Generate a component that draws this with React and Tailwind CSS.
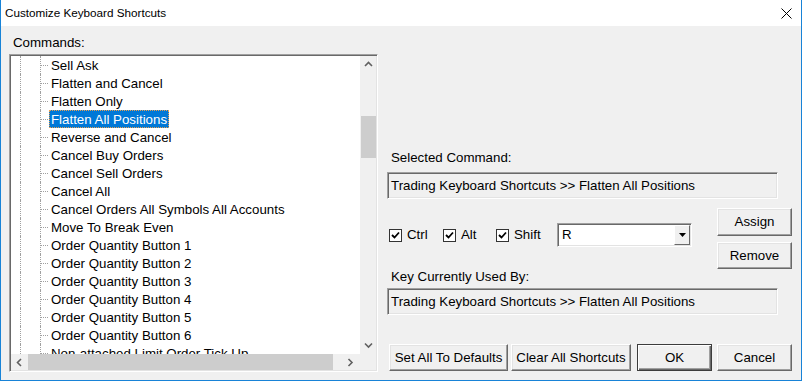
import React from 'react';

const commands = [
  'Sell Ask',
  'Flatten and Cancel',
  'Flatten Only',
  'Flatten All Positions',
  'Reverse and Cancel',
  'Cancel Buy Orders',
  'Cancel Sell Orders',
  'Cancel All',
  'Cancel Orders All Symbols All Accounts',
  'Move To Break Even',
  'Order Quantity Button 1',
  'Order Quantity Button 2',
  'Order Quantity Button 3',
  'Order Quantity Button 4',
  'Order Quantity Button 5',
  'Order Quantity Button 6',
  'Non-attached Limit Order Tick Up',
];

const Chevron = ({ dir }) => {
  const pts = {
    up: '1,5 4.5,1.5 8,5',
    down: '1,1.5 4.5,5 8,1.5',
    left: '5,1 1.5,4.5 5,8',
    right: '1.5,1 5,4.5 1.5,8',
  }[dir];
  const vertical = dir === 'up' || dir === 'down';
  return (
    <svg width={vertical ? 9 : 7} height={vertical ? 7 : 9} viewBox={vertical ? '0 0 9 7' : '0 0 7 9'}>
      <polyline points={pts} fill="none" stroke="#606060" strokeWidth="1.6" />
    </svg>
  );
};

const Btn = ({ children, className = '', isDefault = false }) => (
  <button
    className={`h-[27px] shrink-0 bg-[#f0f0f0] text-[13.3px] text-black whitespace-nowrap ${
      isDefault
        ? 'border border-[#3c3c3c] shadow-[inset_1px_1px_0_#ffffff,inset_-1px_-1px_0_#696969,inset_-2px_-2px_0_#a0a0a0]'
        : 'border border-t-white border-l-white border-r-[#696969] border-b-[#696969] shadow-[inset_-1px_-1px_0_#a0a0a0,inset_1px_1px_0_#e3e3e3]'
    } ${className}`}
  >
    {children}
  </button>
);

const Check = ({ label, width }) => (
  <label className="flex items-center shrink-0" style={{ width }}>
    <span className="w-[13px] h-[13px] bg-white border border-[#333] flex items-center justify-center">
      <svg width="9" height="9" viewBox="0 0 9 9">
        <polyline points="1,4 3.5,6.5 8,1.5" fill="none" stroke="#000" strokeWidth="1.8" />
      </svg>
    </span>
    <span className="ml-[5px] leading-[16px]">{label}</span>
  </label>
);

const ReadBox = ({ children }) => (
  <div className="w-[391px] h-[27px] bg-[#f0f0f0] border border-t-[#a0a0a0] border-l-[#a0a0a0] border-r-white border-b-white shadow-[inset_1px_1px_0_#696969,inset_-1px_-1px_0_#e3e3e3] flex items-center pl-[3px] leading-[16px] whitespace-nowrap">
    {children}
  </div>
);

export default function App() {
  return (
    <div className="w-[802px] h-[381px] flex flex-col bg-[#f0f0f0] border-x border-b border-[#1883d7] font-['Liberation_Sans',Arial,sans-serif] text-[13.3px] text-black overflow-hidden">
      {/* title bar */}
      <div className="h-[26px] shrink-0 bg-white flex items-center justify-between pl-[4px] pr-[9px]">
        <span className="text-[11.7px] leading-[16px]">Customize Keyboard Shortcuts</span>
        <svg width="11" height="11" viewBox="0 0 11 11">
          <path d="M0.5 0.5 L10.5 10.5 M10.5 0.5 L0.5 10.5" stroke="#000" strokeWidth="1" />
        </svg>
      </div>

      <div className="flex flex-1 pl-[8px] pt-[9px]">
        {/* left column */}
        <div className="w-[369px] shrink-0 flex flex-col">
          <div className="pl-[4px] leading-[16px]">Commands:</div>
          <div className="mt-[3px] w-[369px] h-[318px] border border-t-[#a0a0a0] border-l-[#a0a0a0] border-r-white border-b-white shadow-[inset_1px_1px_0_#696969,inset_-1px_-1px_0_#e3e3e3] p-[1px] flex flex-col">
            <div className="flex flex-1 min-h-0">
              <div className="flex-1 bg-white overflow-hidden">
                {commands.map((c, i) => (
                  <div key={c} className="flex h-[18px]">
                    <div className="w-[9px] shrink-0" />
                    <div className="w-[20px] shrink-0 border-l border-dotted border-[#a0a0a0]" />
                    <div className="w-[9px] shrink-0 border-l border-dotted border-[#a0a0a0] pt-[9px]">
                      <div className="w-[7px] border-t border-dotted border-[#a0a0a0]" />
                    </div>
                    <span
                      className={`px-[2px] pt-[1px] leading-[17px] whitespace-nowrap ${
                        i === 3
                          ? 'bg-[#0078d7] text-white outline outline-1 outline-dotted outline-[#e8a050] -outline-offset-1'
                          : ''
                      }`}
                    >
                      {c}
                    </span>
                  </div>
                ))}
              </div>
              <div className="w-[16px] shrink-0 bg-[#f0f0f0] flex flex-col">
                <div className="h-[17px] flex items-center justify-center">
                  <Chevron dir="up" />
                </div>
                <div className="mt-[43px] h-[42px] ml-[1px] bg-[#cdcdcd]" />
                <div className="flex-1" />
                <div className="h-[17px] flex items-center justify-center">
                  <Chevron dir="down" />
                </div>
              </div>
            </div>
            <div className="h-[16px] shrink-0 flex bg-[#f0f0f0]">
              <div className="w-[17px] flex items-center justify-center">
                <Chevron dir="left" />
              </div>
              <div className="w-[305px] bg-[#cdcdcd]" />
              <div className="flex-1 flex items-center justify-end pr-[22px]">
                <Chevron dir="right" />
              </div>
            </div>
          </div>
        </div>

        {/* right column */}
        <div className="ml-[9px] w-[405px] shrink-0 flex flex-col">
          <div className="mt-[115px] pl-[4px] leading-[16px]">Selected Command:</div>
          <div className="mt-[6px]">
            <ReadBox>Trading Keyboard Shortcuts &gt;&gt; Flatten All Positions</ReadBox>
          </div>

          <div className="mt-[9px] h-[61px] flex">
            <div className="flex items-center self-start mt-[15px] h-[24px] pl-[2px]">
              <Check label="Ctrl" width="54px" />
              <Check label="Alt" width="53px" />
              <Check label="Shift" width="61px" />
              <div className="w-[135px] h-[24px] bg-white border border-t-[#a0a0a0] border-l-[#a0a0a0] border-r-white border-b-white shadow-[inset_1px_1px_0_#696969,inset_-1px_-1px_0_#e3e3e3] p-[1px] flex items-center">
                <span className="flex-1 pl-[3px] leading-[16px]">R</span>
                <div className="w-[16px] h-full bg-[#f0f0f0] border border-t-white border-l-white border-r-[#696969] border-b-[#696969] flex items-center justify-center">
                  <svg width="7" height="4" viewBox="0 0 7 4">
                    <polygon points="0,0 7,0 3.5,4" fill="#000" />
                  </svg>
                </div>
              </div>
            </div>
            <div className="ml-auto flex flex-col gap-[6px]">
              <Btn className="w-[75px] h-[28px]">Assign</Btn>
              <Btn className="w-[75px]">Remove</Btn>
            </div>
          </div>

          <div className="pl-[4px] leading-[16px]">Key Currently Used By:</div>
          <div className="mt-[3px]">
            <ReadBox>Trading Keyboard Shortcuts &gt;&gt; Flatten All Positions</ReadBox>
          </div>

          <div className="mt-[29px] flex pl-[2px]">
            <Btn className="w-[119px]">Set All To Defaults</Btn>
            <Btn className="w-[120px] ml-[3px]">Clear All Shortcuts</Btn>
            <Btn className="w-[75px] ml-[6px]" isDefault>OK</Btn>
            <Btn className="w-[75px] ml-[5px]">Cancel</Btn>
          </div>
        </div>
      </div>
    </div>
  );
}
